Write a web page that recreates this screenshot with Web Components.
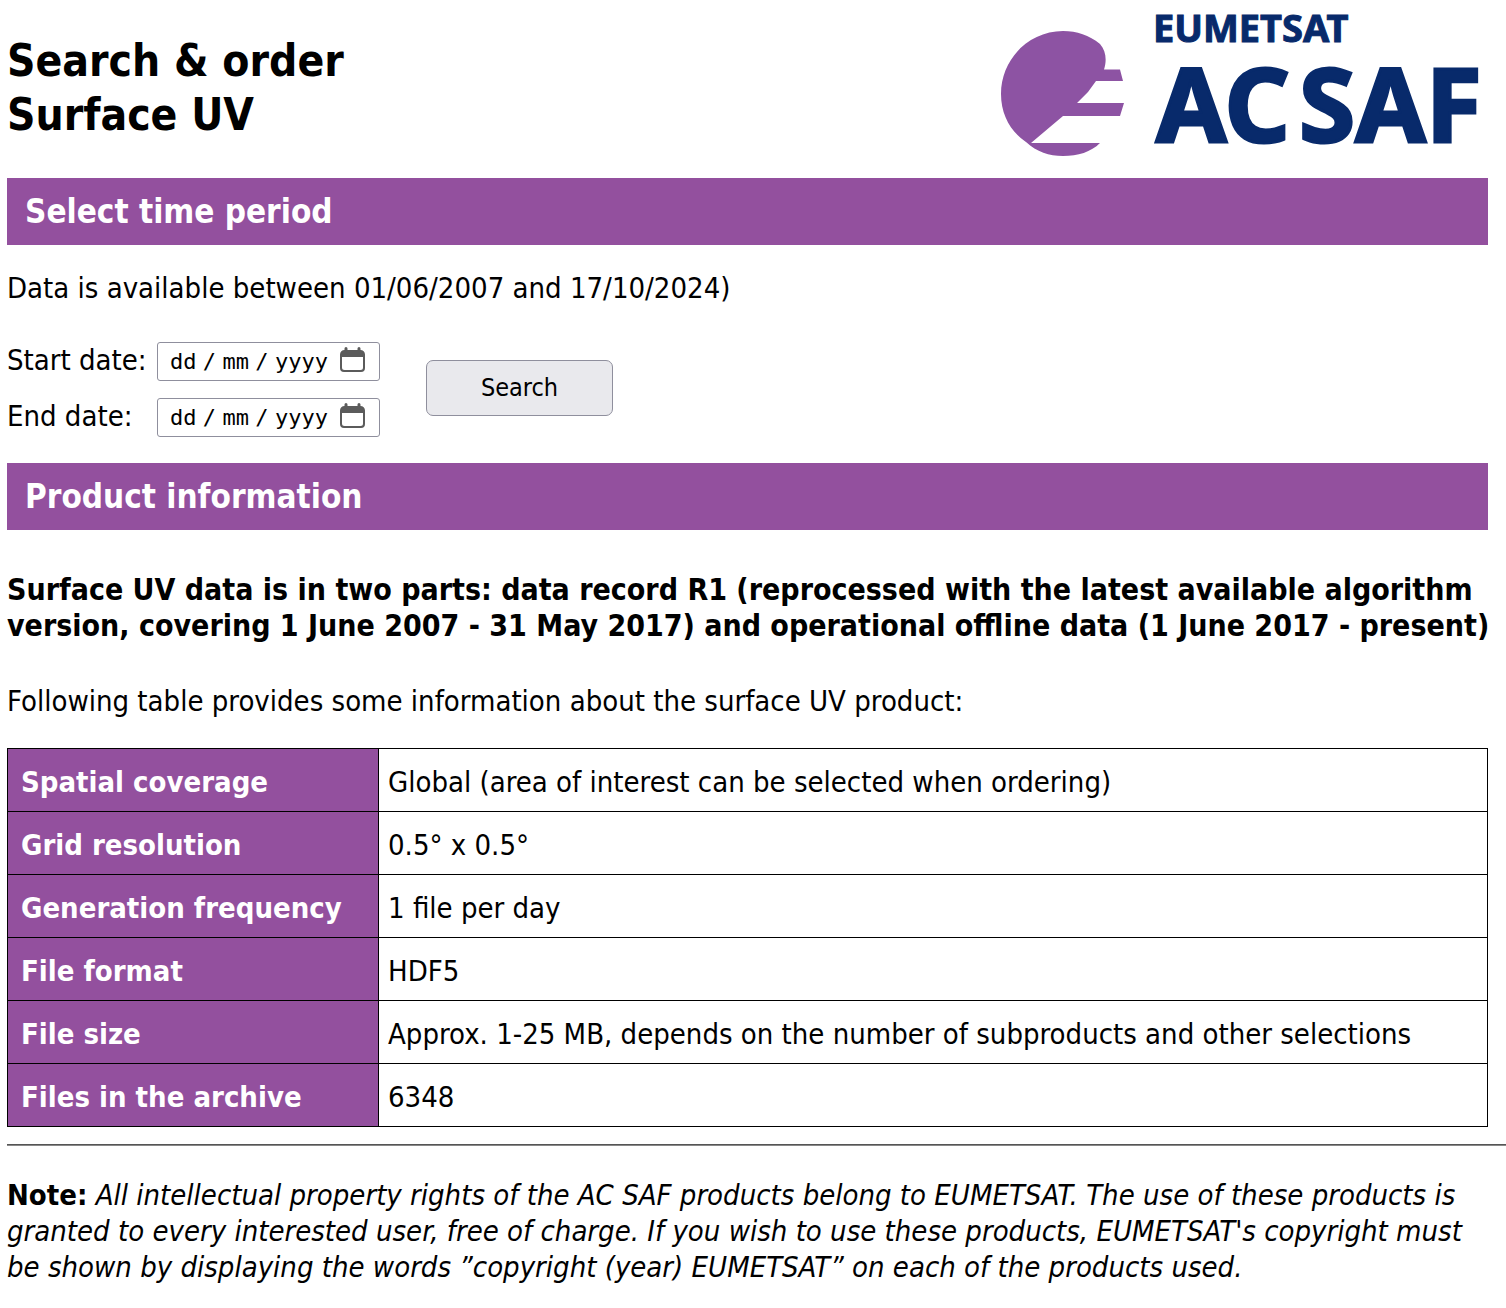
<!DOCTYPE html>
<html lang="en">
<head>
<meta charset="utf-8">
<title>Search &amp; order Surface UV</title>
<style>
  body {
    margin: 0 0 0 7px;
    background: #fff;
    color: #000;
    font: 29px/36px "DejaVu Sans Condensed", "DejaVu Sans", Tahoma, sans-serif;
    --brand: #93509e;
    --control-border: #8f8f9d;
  }
</style>
</head>
<body>
<order-page></order-page>

<script>
const define = (name, html, setup) => {
  const template = document.createElement('template');
  template.innerHTML = html;
  customElements.define(name, class extends HTMLElement {
    constructor() {
      super();
      this.attachShadow({ mode: 'open' }).append(template.content.cloneNode(true));
    }
    connectedCallback() {
      if (setup) setup(this, this.shadowRoot);
    }
  });
};

define('saf-logo', `
  <style>
    :host { display: block; width: 487px; }
    svg { display: block; width: 100%; overflow: visible; }
    text { font-family: "Noto Sans", "Open Sans", sans-serif; font-weight: 700; fill: #082a6b; stroke: #082a6b; }
  </style>
  <svg viewBox="0 0 487 142" role="img" aria-label="EUMETSAT AC SAF">
    <path fill="#8d53a3" d="M99 30C88 21 76 17 62 17C28 17 0 45 0 80C0 101 10 118 25 128C36 138 48 142 62 142C77 142 90 138 99 129H30L62 102H119L123 89H76L87 78L95 67H122L119 55.500H103C106 46 105 37 99 30Z"/>
    <text x="152" y="28" font-size="38" stroke-width="1">EUMETSAT</text>
    <text x="155" y="128" font-size="102" stroke-width="3">AC</text>
    <text x="298" y="128" font-size="102" stroke-width="3">SAF</text>
  </svg>`);

define('page-header', `
  <style>
    :host { display: flex; justify-content: space-between; align-items: flex-start; padding-top: 14px; }
    h1 { margin: 20px 0 36px; font-size: 44px; line-height: 54px; font-weight: 700; }
  </style>
  <h1><slot></slot></h1>
  <saf-logo></saf-logo>`);

define('section-bar', `
  <style>
    :host { display: block; background: var(--brand); color: #fff; padding: 0 18px; }
    h2 { margin: 0; font-size: 33px; line-height: 67px; font-weight: 700; }
  </style>
  <h2><slot></slot></h2>`);

define('date-field', `
  <style>
    :host { display: flex; align-items: flex-start; }
    .label { width: 150px; }
    .box {
      display: flex; align-items: center; box-sizing: border-box; width: 223px; height: 39px;
      padding: 0 14px 0 12px; border: 1px solid var(--control-border); border-radius: 3px; background: #fff;
      font: 22px/36px "DejaVu Sans Mono", monospace;
    }
    input { width: 2ch; padding: 0; border: 0; background: none; font: inherit; color: inherit; outline: 0; }
    input.year { width: 4ch; }
    input::placeholder { color: #000; opacity: 1; }
    .sep { width: 26px; text-align: center; }
    button { display: flex; margin: 0 0 4px auto; padding: 0; border: 0; background: none; }
    svg { display: block; }
  </style>
  <label class="label" for="day"><slot></slot></label>
  <div class="box" role="group">
    <input id="day" placeholder="dd" maxlength="2"><span class="sep">/</span><input placeholder="mm" maxlength="2" aria-label="Month"><span class="sep">/</span><input class="year" placeholder="yyyy" maxlength="4" aria-label="Year">
    <button type="button" aria-label="Open calendar">
      <svg width="25" height="26" viewBox="0 0 25 26" fill="#5b5b5b"><path fill-rule="evenodd" d="M4.500 1.500a1.500 1.500 0 0 1 3 0V3h10V1.500a1.500 1.500 0 0 1 3 0V3a4.500 4.500 0 0 1 4.500 4.500V21a4 4 0 0 1-4 4H4a4 4 0 0 1-4-4V7.500A4.500 4.500 0 0 1 4.500 3ZM2 10v10.500a2.500 2.500 0 0 0 2.500 2.500h16a2.500 2.500 0 0 0 2.500-2.500V10Z"/></svg>
    </button>
  </div>`, (host, root) => {
    root.querySelector('.box').setAttribute('aria-label', host.textContent);
  });

define('period-form', `
  <style>
    :host { display: block; }
    form { display: flex; align-items: flex-start; gap: 46px; margin: 0; }
    .dates { display: flex; flex-direction: column; gap: 17px; }
    button {
      width: 187px; height: 56px; margin: 18px 0 0; padding: 0; border: 1px solid var(--control-border); border-radius: 7px;
      background: #e9e9ed; color: #000; font-family: inherit; font-size: 25px; line-height: 36px;
    }
  </style>
  <form>
    <div class="dates">
      <date-field>Start date:</date-field>
      <date-field>End date:</date-field>
    </div>
    <button type="button">Search</button>
  </form>`);

define('product-table', `
  <style>
    :host { display: block; }
    table { width: 100%; border-collapse: collapse; }
    th, td { border: 1px solid #000; text-align: left; line-height: 36px; vertical-align: top; }
    th { width: 347px; padding: 15px 10px 11px 13px; background: var(--brand); color: #fff; font-weight: 700; }
    td { padding: 15px 9px 11px; }
  </style>
  <table><tbody></tbody></table>`, (host, root) => {
    const rows = [
      ['Spatial coverage', 'Global (area of interest can be selected when ordering)'],
      ['Grid resolution', '0.5° x 0.5°'],
      ['Generation frequency', '1 file per day'],
      ['File format', 'HDF5'],
      ['File size', 'Approx. 1-25 MB, depends on the number of subproducts and other selections'],
      ['Files in the archive', '6348']
    ];
    const body = root.querySelector('tbody');
    for (const [name, value] of rows) {
      const row = body.insertRow();
      const head = document.createElement('th');
      head.scope = 'row';
      head.textContent = name;
      row.append(head);
      row.insertCell().textContent = value;
    }
  });

define('order-page', `
  <style>
    :host { display: block; }
    main { padding-right: 18px; }
    p { margin: 0; }
    .range { margin: 25px 0 36px; }
    .parts { margin: 42px 0 39px; font-weight: 700; font-size: 30px; white-space: nowrap; }
    .intro { margin-bottom: 29px; }
    period-form { margin-bottom: 26px; }
    hr { margin: 17px 0 31px; border: 0; height: 2px; background: linear-gradient(#555 50%, #888 50%); }
    footer { padding-right: 18px; white-space: nowrap; }
  </style>
  <main>
    <page-header>Search &amp; order<br>Surface UV</page-header>
    <section-bar>Select time period</section-bar>
    <p class="range">Data is available between 01/06/2007 and 17/10/2024)</p>
    <period-form></period-form>
    <section-bar>Product information</section-bar>
    <p class="parts">Surface UV data is in two parts: data record R1 (reprocessed with the latest available algorithm<br>version, covering 1 June 2007 - 31 May 2017) and operational offline data (1 June 2017 - present)</p>
    <p class="intro">Following table provides some information about the surface UV product:</p>
    <product-table></product-table>
  </main>
  <hr>
  <footer><b>Note:</b> <i>All intellectual property rights of the AC SAF products belong to EUMETSAT. The use of these products is<br>granted to every interested user, free of charge. If you wish to use these products, EUMETSAT's copyright must<br>be shown by displaying the words ”copyright (year) EUMETSAT” on each of the products used.</i></footer>`);
</script>
</body>
</html>
